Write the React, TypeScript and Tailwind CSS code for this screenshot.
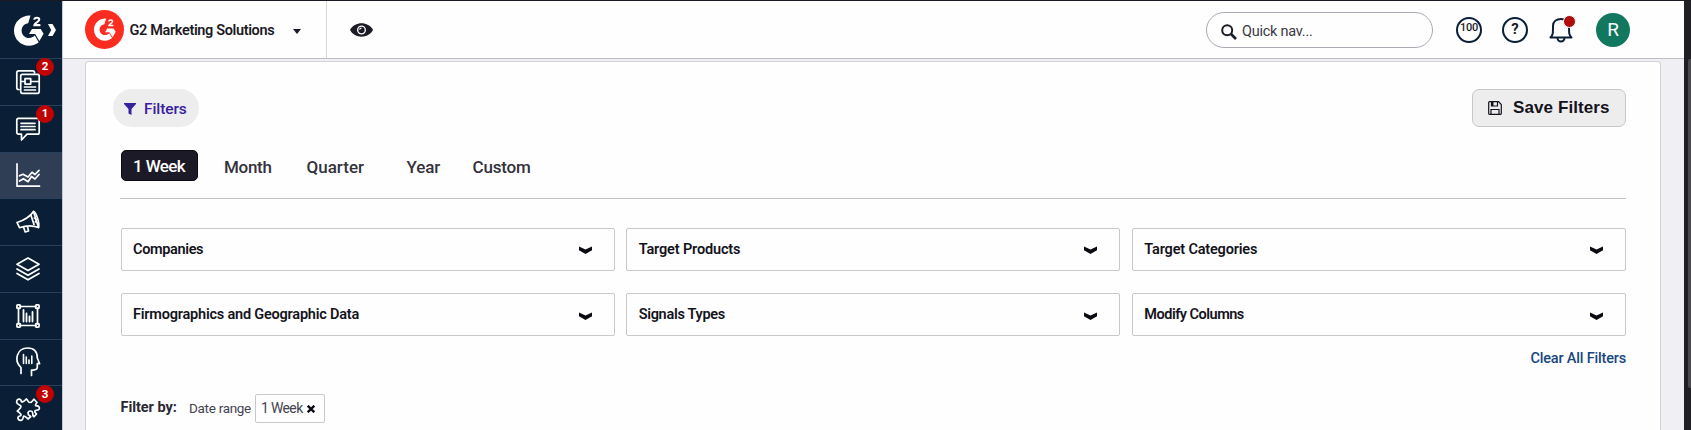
import type { ReactNode } from 'react';

function G2Mark({ className }: { className?: string }) {
  return (
    <svg viewBox="0 0 30 31" className={className} fill="none">
      <path
        d="M16.500 .6C7.500 .2 0 7 0 15.700C0 24 6.700 30.700 15 30.700C18.800 30.700 22 29.500 24.700 27.200L20.800 20.600C19.300 22.100 17.300 23 15 23C10.900 23 7.600 19.800 7.600 15.700C7.600 11.600 10.800 8.500 14.200 8.300Z"
        fill="currentColor"
      />
      <path d="M18 14H26.700L29.600 18.700L25.400 26L21.200 19.100H15Z" fill="currentColor" />
      <path
        d="M20.200 4.600C20.500 2.200 25.300 1.900 25.300 4.600C25.300 7.200 20.600 7.500 20.400 10.100H26.400"
        stroke="currentColor"
        strokeWidth="2.100"
      />
    </svg>
  );
}

function LineIcon({ children }: { children: ReactNode }) {
  return (
    <svg
      viewBox="0 0 24 24"
      className="size-6 overflow-visible text-white"
      fill="none"
      stroke="currentColor"
      strokeWidth="1.700"
      strokeLinecap="round"
      strokeLinejoin="round"
    >
      {children}
    </svg>
  );
}

type NavItem = { label: string; badge?: number; active?: boolean; icon: ReactNode };

const NAV: NavItem[] = [
  {
    label: 'Profile',
    badge: 2,
    icon: (
      <>
        <path d="M3 19.500H2.500A1.700 1.700 0 0 1 .8 17.800V2.500A1.700 1.700 0 0 1 2.500 .8H17A1.500 1.500 0 0 1 18.500 2.300V3" />
        <rect x="4.700" y="4.300" width="18.500" height="19" rx="1.700" />
        <path d="M4.700 11.500H9M15 11.500H23M8.500 17H19.500M8.500 20H19.500" />
        <rect x="9" y="8.700" width="5.700" height="5.400" />
      </>
    ),
  },
  {
    label: 'Reviews',
    badge: 1,
    icon: (
      <>
        <path d="M2.500 1.300H21.500A1.700 1.700 0 0 1 23.200 3V15.500A1.700 1.700 0 0 1 21.500 17.200H11L5.500 23V17.200H2.500A1.700 1.700 0 0 1 .8 15.500V3A1.700 1.700 0 0 1 2.500 1.300Z" />
        <path d="M5 6.300H19M5 9.500H19M5 12.700H19" />
      </>
    ),
  },
  {
    label: 'Analytics',
    active: true,
    icon: (
      <>
        <path d="M1 .8V23.200H23.500" />
        <path d="M3.500 12.800L7 11.200L12 14L16 9.300L19 11.500L23 7.300M3.500 18L7.500 15.700L12 18.700L15.500 13.500L19 16L23 11.500" />
      </>
    ),
  },
  {
    label: 'Campaigns',
    icon: (
      <>
        <path d="M17.500 1.500L22.500 17.500C16.500 15.300 10 15.500 3.500 17.700L1 12.500C7.500 10.500 13.500 7.500 17.500 1.500Z" />
        <path d="M17.500 1.500C20.500 2.500 23.800 13.500 22.500 17.500M7.500 17L9.200 22L12.500 21L11.500 16.500M15 5.500L18 14.500M18.300 8C20.500 8.700 20.800 10.500 19.300 12" />
      </>
    ),
  },
  {
    label: 'Stack',
    icon: (
      <>
        <path d="M12 1L23 7.300L12 13.600L1 7.300Z" />
        <path d="M1 12L12 18.300L23 12M1 16.500L12 22.800L23 16.500" />
      </>
    ),
  },
  {
    label: 'Market',
    icon: (
      <>
        <path d="M4 2.500H20M4 21.500H20M2.500 4V20M21.500 4V20" />
        <rect x=".9" y=".9" width="3.500" height="3.500" rx=".8" />
        <rect x="19.600" y=".9" width="3.500" height="3.500" rx=".8" />
        <rect x=".9" y="19.600" width="3.500" height="3.500" rx=".8" />
        <rect x="19.600" y="19.600" width="3.500" height="3.500" rx=".8" />
        <path d="M7.500 6V17.500M10.500 9.500V17.500M13.500 12.500V17.500M16.500 8V17.500" strokeWidth="1.800" />
      </>
    ),
  },
  {
    label: 'Insights',
    icon: (
      <>
        <path d="M5 23.500V17.500C-3 10 1.500 -2 11.500 -2C18 -2 21.300 2 21.300 8L23.600 13.700H21.300V17.500C21.300 19.500 19 20.200 15.500 20V25.500" />
        <path d="M7.500 4.500V13.500M10.300 7V13.500M13 10V13.500M15.800 6V13.500" strokeWidth="1.600" />
      </>
    ),
  },
  {
    label: 'Integrations',
    badge: 3,
    icon: (
      <path d="M4 8.200C1.500 7.300 -.2 5.500 1 3.300C2.300 1.200 5 2 5.300 4.200C5.600 5.500 7.500 5 10.200 2C12.500 3.800 11.800 5.300 13.800 5.500C16 5.600 16.500 3.200 18 2.200L21 5.500C19.500 7.500 18.800 8.700 20.300 9C22.500 8.500 24.200 10.500 23 12.300C21.800 14 19.500 12.500 18.800 14C18.600 15.500 20 16 20.500 17L18 19.800C16.500 18.800 16.500 17.500 16.700 16C16.500 13.500 12.800 13.300 12 15.700C11.500 18.300 13.500 18.300 14.800 19.500L12 22C10.500 20.500 8.800 18.500 7.600 19.200C6.800 20.200 7.800 22 5.500 23.200C3 24 .8 21.500 2.500 19.700C3.500 18.800 5.300 19 5 17.600C4.500 16.300 3 15.500 1.300 14C3 12.500 6.500 9.500 4 8.200Z" />
    ),
  },
];

function Sidebar() {
  return (
    <nav className="flex h-full w-[62px] shrink-0 flex-col bg-[#0a1f36]">
      <div className="flex h-[57px] shrink-0 items-center gap-[4px] pl-[14px] pt-[1px] text-white">
        <G2Mark className="h-[31px] w-[30px]" />
        <svg viewBox="0 0 8 12" className="-mt-px h-[12px] w-[8px]">
          <path d="M0 0H4.500L8 6L4.500 12H0L3.200 6Z" fill="currentColor" />
        </svg>
      </div>
      {NAV.map((item) => (
        <div
          key={item.label}
          aria-label={item.label}
          className={`flex h-[46.75px] shrink-0 items-center border-t border-[#27415d] pl-[16px] ${item.active ? 'bg-[#303e55]' : ''}`}
        >
          <div className="relative">
            <LineIcon>{item.icon}</LineIcon>
            {item.badge && (
              <span className="absolute -top-[12px] left-[20px] flex size-[18px] items-center justify-center rounded-full bg-[#c00303] text-[11.5px] font-bold text-white">
                {item.badge}
              </span>
            )}
          </div>
        </div>
      ))}
    </nav>
  );
}

function Header() {
  return (
    <header className="flex h-[58px] shrink-0 items-center border-b border-[#bfbfc3] bg-[#fefefe] text-[#1c1b25]">
      <div className="flex h-full w-[264px] items-center border-r border-[#d8d8dc] pl-[22px]">
        <span className="flex size-[39px] shrink-0 items-center justify-center rounded-full bg-[#fb2d20] pl-px text-white">
          <G2Mark className="h-[23px] w-[22px]" />
        </span>
        <span className="ml-[5.500px] mt-[2px] w-[163.500px] whitespace-nowrap text-[14.5px] font-semibold tracking-[-0.36px]">
          G2 Marketing Solutions
        </span>
        <svg viewBox="0 0 8 5" className="mt-[3px] h-[5px] w-[8px]">
          <path d="M0 0H8L4 5Z" fill="currentColor" />
        </svg>
      </div>
      <svg viewBox="0 0 24 14" className="ml-[23px] h-[14px] w-[23px]">
        <path d="M0 7C5 -2.300 19 -2.300 24 7C19 16.300 5 16.300 0 7Z" fill="currentColor" />
        <circle cx="12" cy="7" r="4" fill="none" stroke="#fefefe" strokeWidth="1.400" />
        <path d="M10 6.500A2 2 0 0 1 12 5" stroke="#fefefe" strokeWidth="1.200" fill="none" />
      </svg>
      <div className="ml-auto flex items-center pr-[54px]">
        <div className="flex h-[36px] w-[227px] items-center rounded-full border border-[#a9a9b3] pl-[14px]">
          <svg viewBox="0 0 16 16" className="mt-[4px] size-[16px]" fill="none" stroke="currentColor">
            <circle cx="6.200" cy="6.200" r="5" strokeWidth="2" />
            <path d="M10 10L15 15" strokeWidth="2.600" />
          </svg>
          <span className="ml-[5px] mt-[5px] text-[14.5px] tracking-[-0.25px] text-[#3a3944]">Quick nav...</span>
        </div>
        <span className="ml-[23px] flex size-[26px] items-center justify-center rounded-full border-2 border-[#0a1f36] text-[11px] font-medium tracking-[-0.2px]">
          <span className="-mt-[2px]">100</span>
        </span>
        <span className="ml-[20px] flex size-[26px] items-center justify-center rounded-full border-2 border-[#0a1f36] text-[15px] font-bold">
          ?
        </span>
        <div className="relative ml-[21px]">
          <svg
            viewBox="0 0 24 26"
            className="h-[26px] w-[24px] text-[#0a1f36]"
            fill="none"
            stroke="currentColor"
            strokeWidth="2"
            strokeLinejoin="round"
          >
            <path d="M1.500 20.500C4 18 4 16.500 4 9C4 4.500 7.500 2 12 2C16.500 2 20 4.500 20 9C20 16.500 20 18 22.500 20.500Z" />
            <path d="M8.500 21A3.500 3.500 0 0 0 15.500 21" />
          </svg>
          <span className="absolute -top-[2px] left-[14px] size-[13px] rounded-full border border-white bg-[#b00c0c]" />
        </div>
        <span className="ml-[23px] flex size-[34px] items-center justify-center rounded-full bg-[#11785f] pt-px text-[19px] text-white">
          R
        </span>
      </div>
    </header>
  );
}

function SelectBox({ label, tracking }: { label: string; tracking: string }) {
  return (
    <button className="flex h-[43px] items-center justify-between rounded-[2px] border border-[#c9c9cc] pl-[11.5px] pr-[22px]">
      <span className={`mt-px whitespace-nowrap text-[14.5px] font-semibold text-[#14131c] ${tracking}`}>{label}</span>
      <svg viewBox="0 0 13 8" className="mt-[2px] h-[8px] w-[13px]">
        <path d="M0 0.500L6.500 3.600L13 0.500V4.300L6.500 8L0 4.300Z" fill="#0b0a12" />
      </svg>
    </button>
  );
}

export default function App() {
  return (
    <div className="flex h-[430px] w-[1691px] overflow-hidden border-t border-[#1b1a22] bg-[#f0f0f4] font-['Roboto','Liberation_Sans',sans-serif]">
      <Sidebar />
      <div className="flex w-[1622px] shrink-0 flex-col border-l border-[#c4c9d2]">
        <Header />
        <main className="ml-[22px] mr-[23px] mt-[2px] flex-1 rounded-t-[4px] border border-b-0 border-[#d3d3d7] bg-[#fefefe] pl-[34px] pr-[34px]">
          <div className="-ml-[7px] mt-[27px] flex items-center justify-between">
            <div className="flex h-[38px] w-[86px] items-center rounded-full bg-[#ededed] pl-[11px] text-[#37219f]">
              <svg viewBox="0 0 12 12" className="mt-px size-[12px]">
                <path d="M0 0H12V1L7.500 6V12L4.500 10.500V6L0 1Z" fill="currentColor" />
              </svg>
              <span className="ml-[8px] mt-[3px] text-[15.5px] font-medium tracking-[-0.1px]">Filters</span>
            </div>
            <button className="flex h-[38px] w-[154px] items-center rounded-[7px] border border-[#c6c6cc] bg-[#ededee] pl-[15px] text-[#14131c]">
              <svg viewBox="0 0 14 14" className="size-[14px]" fill="none" stroke="currentColor" strokeWidth="1.200">
                <path d="M.7 1.500Q.7 .7 1.500 .7H10.500L13.300 3.500V12.500Q13.300 13.300 12.500 13.300H1.500Q.7 13.300 .7 12.500Z" />
                <path d="M3 13V8.500H11V13" />
                <path d="M3.500 1V5H9.500V1" />
                <path d="M4.500 1V5" strokeWidth="2" />
              </svg>
              <span className="-mt-px ml-[11px] whitespace-nowrap font-['Liberation_Sans',Arial,sans-serif] text-[17px] font-bold tracking-[0.1px]">
                Save Filters
              </span>
            </button>
          </div>
          <div className="ml-[.5px] mt-[23px] flex h-[31px] items-center text-[17px] font-medium text-[#33323d]">
            <span className="flex h-[31px] w-[77px] items-center justify-center rounded-[5px] border border-[#0d0c14] bg-[#1c1a26] pt-[3px] tracking-[-0.6px] text-white">
              1 Week
            </span>
            <span className="ml-[26.500px] mt-[4px] w-[82.500px] tracking-[-0.3px]">Month</span>
            <span className="mt-[4px] w-[100px]">Quarter</span>
            <span className="mt-[4px] w-[66px] tracking-[-0.1px]">Year</span>
            <span className="mt-[4px] tracking-[-0.2px]">Custom</span>
          </div>
          <div className="mt-[17px] border-t border-[#c2c2c4]" />
          <div className="ml-[.5px] mt-[28.500px] grid grid-cols-3 gap-x-[11.500px] gap-y-[22.500px]">
            <SelectBox label="Companies" tracking="tracking-[-0.35px]" />
            <SelectBox label="Target Products" tracking="tracking-[-0.15px]" />
            <SelectBox label="Target Categories" tracking="tracking-[-0.18px]" />
            <SelectBox label="Firmographics and Geographic Data" tracking="tracking-[-0.21px]" />
            <SelectBox label="Signals Types" tracking="tracking-[-0.3px]" />
            <SelectBox label="Modify Columns" tracking="tracking-[-0.5px]" />
          </div>
          <div className="mt-[13px] text-right text-[14.500px] font-medium leading-[20px] tracking-[-0.18px] text-[#16477f]">
            Clear All Filters
          </div>
          <div className="mt-[24.500px] flex h-[29px] items-center text-[#44434e]">
            <span className="w-[69px] whitespace-nowrap pl-[.5px] text-[14.500px] font-bold tracking-[-0.05px] text-[#2a2933]">
              Filter by:
            </span>
            <span className="w-[66px] whitespace-nowrap text-[13.500px] tracking-[-0.3px]">Date range</span>
            <span className="flex h-[29px] w-[70px] items-center rounded-[2px] border border-[#c9c9cc] pl-[5px] text-[14px] tracking-[-0.65px]">
              <span className="w-[46px] whitespace-nowrap">1 Week</span>
              <svg viewBox="0 0 8 8" className="mt-[2px] size-[8px]" stroke="#0b0a12" strokeWidth="2.300">
                <path d="M.7 .7L7.300 7.300M7.300 .7L.7 7.300" />
              </svg>
            </span>
          </div>
        </main>
      </div>
      <div className="flex h-full flex-1 justify-end bg-[#1f1f24]">
        <span className="mt-[58px] h-[329px] w-[3px] rounded-l-[2px] bg-[#4a4a4e]" />
      </div>
    </div>
  );
}
